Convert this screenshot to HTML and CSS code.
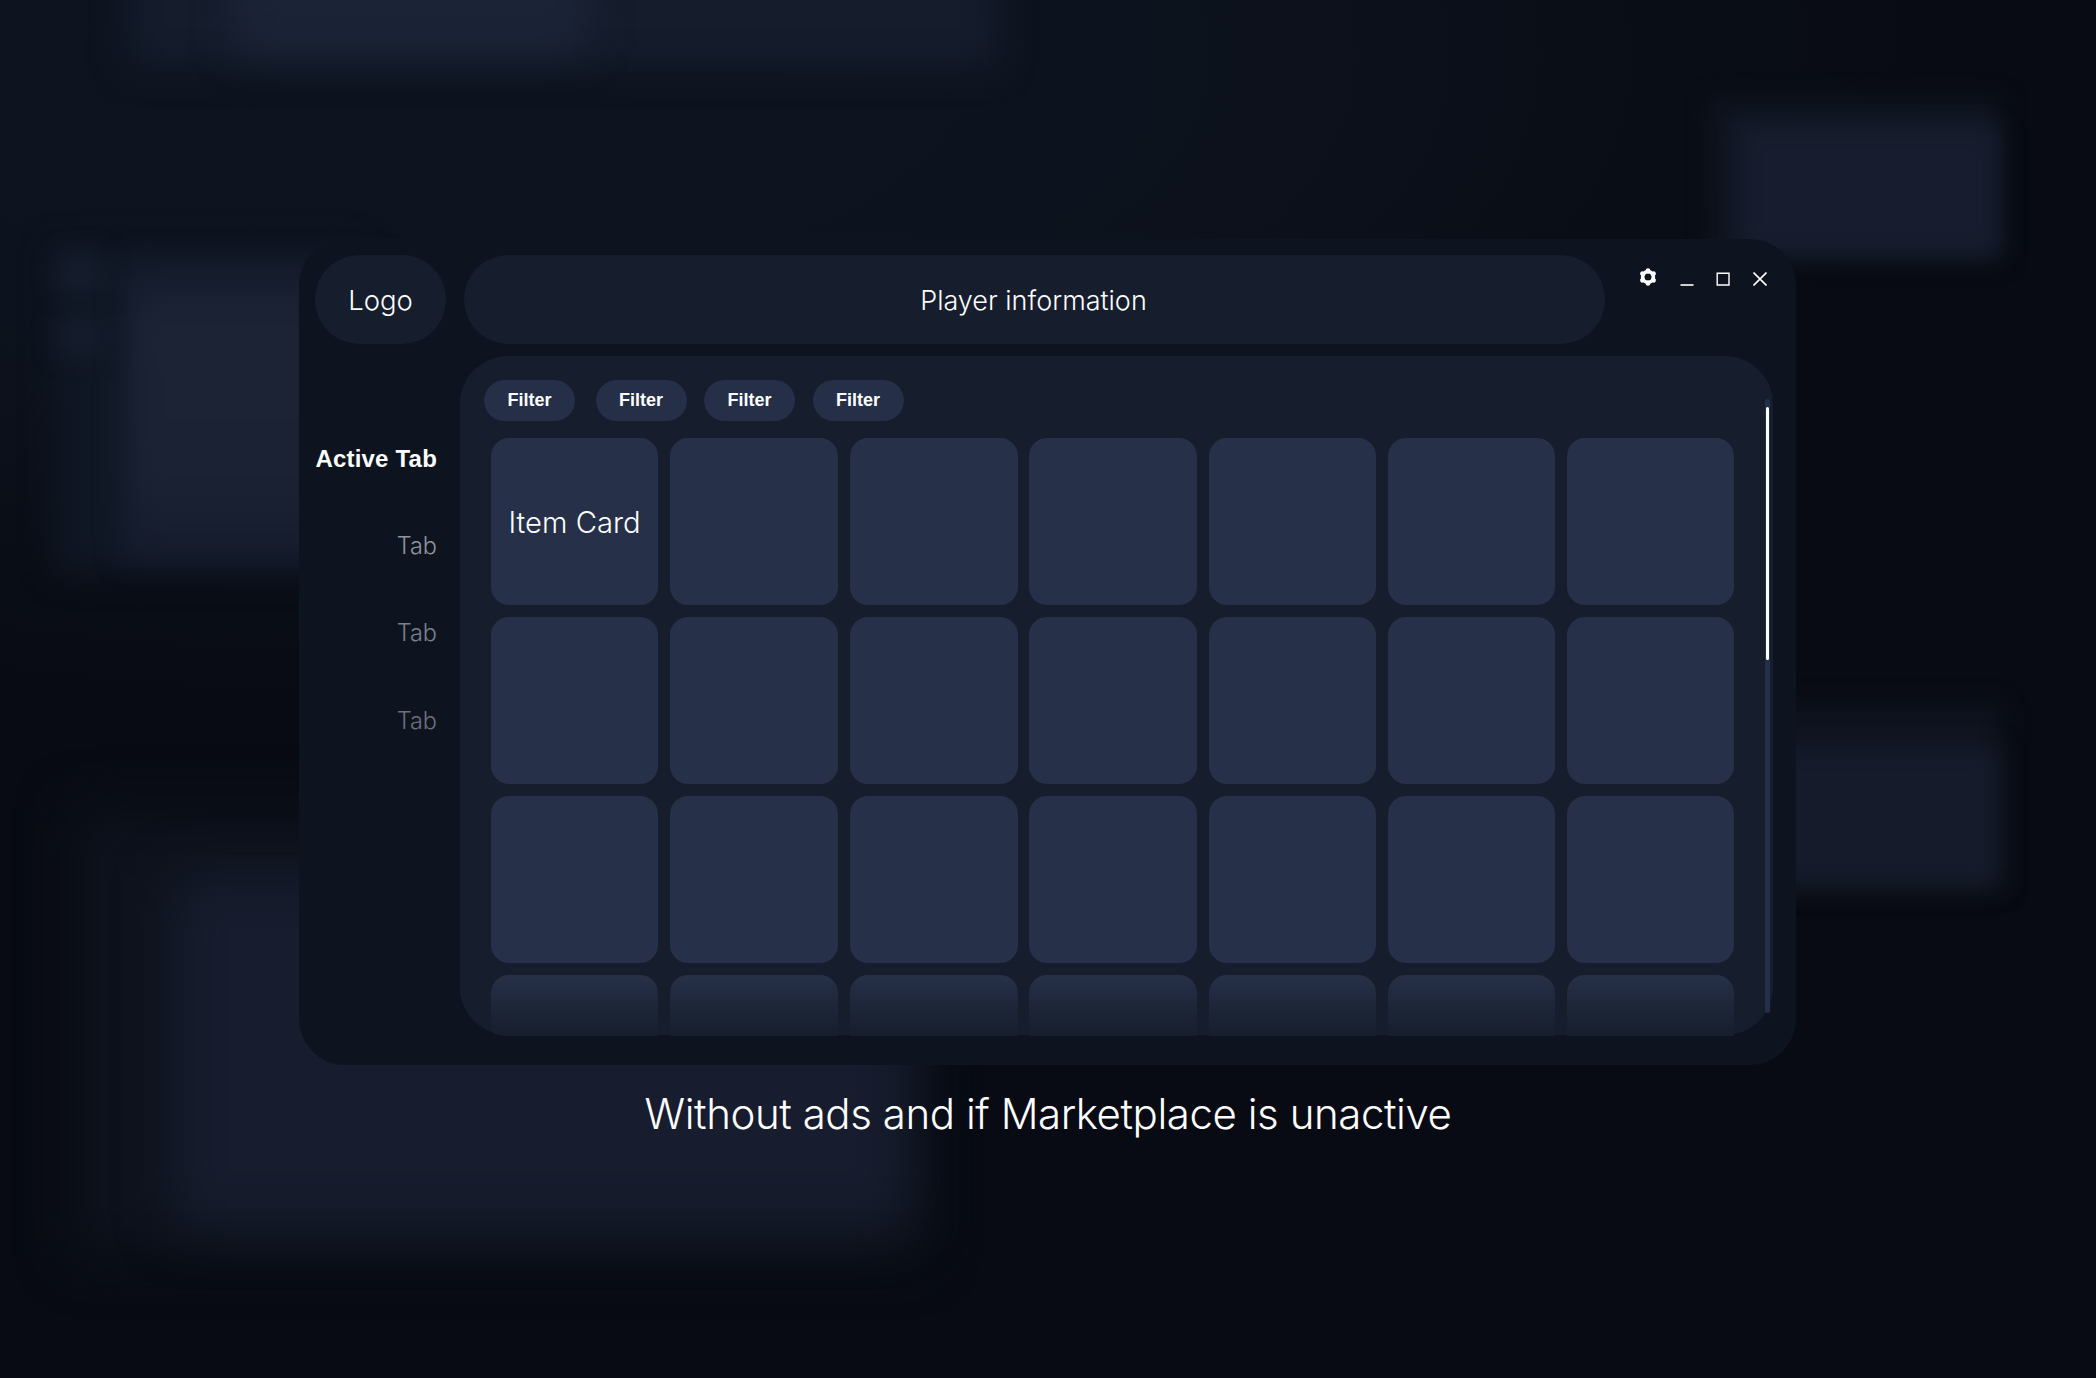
FILE: index.html
```html
<!DOCTYPE html>
<html lang="en">
<head>
    <meta charset="UTF-8">
    <meta name="viewport" content="width=device-width, initial-scale=1.0">
    <title>Inventory</title>
    <link rel="stylesheet" href="styles.css">
</head>
<body>
    <!-- Blurred shapes behind the window -->
    <div class="backdrop">
        <span class="glow glow-top"></span>
        <span class="glow glow-top-inner"></span>
        <span class="glow glow-left"></span>
        <span class="glow glow-left-inner"></span>
        <span class="glow glow-dot dot-one"></span>
        <span class="glow glow-dot dot-two"></span>
        <span class="glow glow-right"></span>
        <span class="glow glow-right-inner"></span>
        <span class="glow glow-middle"></span>
        <span class="glow glow-middle-inner"></span>
        <span class="glow glow-bottom"></span>
        <span class="glow glow-bottom-inner"></span>
    </div>

    <main class="window">
        <header class="header">
            <div class="logo">Logo</div>
            <div class="player-info">Player information</div>
            <div class="controls">
                <svg width="18" height="18" viewBox="0 0 18 18" fill="none" stroke="#fff">
                    <circle cx="9" cy="9" r="5.400" stroke-width="3.600"/>
                    <path stroke-width="4.600" stroke-linecap="round" d="M9 3.200V2.500M9 14.800v.7M14 6.100l.6-.35M4 11.900l-.6.35M14 11.900l.6.35M4 6.100l-.6-.35"/>
                </svg>
                <svg width="14" height="14" viewBox="0 0 14 14"><path d="M0.500 13h13" stroke="#fff" stroke-width="1.600"/></svg>
                <svg width="14" height="14" viewBox="0 0 14 14"><path d="M1.200 1.200h11.800v11.800H1.200z" fill="none" stroke="#fff" stroke-width="1.400"/></svg>
                <svg width="14" height="14" viewBox="0 0 14 14"><path d="M.5.5l13 13M13.500.5l-13 13" stroke="#fff" stroke-width="1.600"/></svg>
            </div>
        </header>

        <div class="content">
            <nav class="tabs">
                <a class="tab active">Active Tab</a>
                <a class="tab">Tab</a>
                <a class="tab tab-dim">Tab</a>
                <a class="tab tab-dimmer">Tab</a>
            </nav>

            <section class="panel">
                <div class="filters">
                    <button class="filter">Filter</button>
                    <button class="filter">Filter</button>
                    <button class="filter">Filter</button>
                    <button class="filter">Filter</button>
                </div>
                <div class="cards">
                    <div class="card">Item Card</div>
                    <div class="card"></div>
                    <div class="card"></div>
                    <div class="card"></div>
                    <div class="card"></div>
                    <div class="card"></div>
                    <div class="card"></div>
                    <div class="card"></div>
                    <div class="card"></div>
                    <div class="card"></div>
                    <div class="card"></div>
                    <div class="card"></div>
                    <div class="card"></div>
                    <div class="card"></div>
                    <div class="card"></div>
                    <div class="card"></div>
                    <div class="card"></div>
                    <div class="card"></div>
                    <div class="card"></div>
                    <div class="card"></div>
                    <div class="card"></div>
                    <div class="card fade"></div>
                    <div class="card fade"></div>
                    <div class="card fade"></div>
                    <div class="card fade"></div>
                    <div class="card fade"></div>
                    <div class="card fade"></div>
                    <div class="card fade"></div>
                </div>
                <div class="scrollbar"><div class="thumb"></div></div>
            </section>
        </div>
    </main>

    <p class="caption">Without ads and if Marketplace is unactive</p>
</body>
</html>
```
FILE: styles.css
```css
* {
    box-sizing: border-box;
}
body {
    margin: 0;
    height: 100vh;
    padding-top: 239px;
    overflow: hidden;
    position: relative;
    color: #fff;
    font-family: Inter, "Liberation Sans", sans-serif;
    font-weight: 300;
    background: radial-gradient(ellipse 1500px 640px at 420px 60px, #0d141f 0%, #0d131e 45%, #080b13 100%) #080b13;
}

/* Backdrop */
.backdrop {
    position: absolute;
    inset: 0;
    overflow: hidden;
    z-index: -1;
}
.glow {
    position: absolute;
    background: #171d2e;
    filter: blur(12px);
}
.glow-top {
    left: 130px;
    top: -60px;
    width: 866px;
    height: 124px;
    background: #151c2c;
    filter: blur(18px);
}
.glow-top-inner {
    left: 235px;
    top: -60px;
    width: 350px;
    height: 112px;
    background: #1b2437;
    filter: blur(20px);
}
.glow-left {
    left: 55px;
    top: 248px;
    width: 300px;
    height: 325px;
    background: #101724;
    filter: blur(16px);
}
.glow-left-inner {
    left: 124px;
    top: 262px;
    width: 260px;
    height: 298px;
    background: linear-gradient(#151b2b, #1b2335 20%, #1a2234 70%, #161c2d);
    filter: blur(14px);
}
.glow-dot {
    left: 58px;
    width: 44px;
    height: 36px;
    background: #161d2d;
}
.dot-one {
    top: 255px;
}
.dot-two {
    top: 318px;
}
.glow-right {
    left: 1712px;
    top: 100px;
    width: 288px;
    height: 160px;
    background: #101622;
}
.glow-right-inner {
    left: 1740px;
    top: 126px;
    width: 258px;
    height: 128px;
    filter: blur(11px);
}
.glow-middle {
    left: 1700px;
    top: 706px;
    width: 302px;
    height: 182px;
    background: #0f141f;
}
.glow-middle-inner {
    left: 1700px;
    top: 748px;
    width: 298px;
    height: 138px;
    background: #161b2b;
}
.glow-bottom {
    left: 72px;
    top: 808px;
    width: 850px;
    height: 450px;
    background: #0d121c;
    filter: blur(26px);
}
.glow-bottom-inner {
    left: 174px;
    top: 876px;
    width: 734px;
    height: 350px;
    filter: blur(27px);
}

/* Window */
.window {
    width: 1497px;
    height: 826px;
    margin: 0 auto 0 299px;
    padding-top: 16px;
    border-radius: 46px;
    background: #0e141f;
}
.header {
    display: flex;
    gap: 18px;
    padding-left: 16px;
}
.logo, .player-info {
    height: 89px;
    padding-top: 1px;
    display: flex;
    align-items: center;
    justify-content: center;
    border-radius: 45px;
    background: #161d2d;
    font-size: 27px;
}
.logo {
    width: 131px;
    font-size: 27.500px;
}
.player-info {
    width: 1141px;
    padding-right: 2px;
}
.controls {
    display: flex;
    align-items: flex-end;
    gap: 22.700px;
    height: 31px;
    margin-left: 16px;
}

/* Tabs and panel */
.content {
    display: flex;
    margin-top: 12px;
}
.tabs {
    width: 161px;
    padding: 88px 23px 0 0;
    display: flex;
    flex-direction: column;
    align-items: flex-end;
}
.tab {
    height: 87.200px;
    line-height: 29px;
    font-size: 23.500px;
    white-space: nowrap;
    color: #90949d;
}
.tab-dim {
    color: #7c808b;
}
.tab-dimmer {
    color: #6c707c;
}
.active {
    color: #fff;
    font-family: "Liberation Sans", Arial, sans-serif;
    font-size: 24px;
    font-weight: 700;
    letter-spacing: 0.200px;
}
.panel {
    position: relative;
    width: 1313px;
    height: 679px;
    padding: 24px 40px 0 31px;
    border-radius: 48px;
    background: #161d2d;
}
.filters {
    display: flex;
    gap: 17.500px;
    margin-left: -7px;
}
.filter {
    width: 91px;
    height: 41px;
    padding: 0;
    border: none;
    border-radius: 20.500px;
    background: #252f48;
    color: #fff;
    font-family: "Liberation Sans", Arial, sans-serif;
    font-size: 18px;
    font-weight: 700;
    line-height: 41px;
}
.filter:first-child {
    margin-right: 3px;
}
.cards {
    display: grid;
    grid-template-columns: 167px 168px 168px 168px 167px 167px 167px;
    grid-template-rows: repeat(3, 167px) 61px;
    gap: 12px 11.800px;
    margin-top: 17px;
}
.card {
    display: flex;
    align-items: center;
    justify-content: center;
    border-radius: 18px;
    background: #263048;
    font-size: 29.200px;
}
.card:first-child {
    padding-top: 1px;
}
.fade {
    border-radius: 18px 18px 0 0;
    background: linear-gradient(#263048, #1b2435 65%, #171e2e);
}
.fade:nth-last-child(7) {
    border-bottom-left-radius: 18px 6px;
}
.scrollbar {
    position: absolute;
    top: 43px;
    right: 3px;
    width: 5px;
    height: 614px;
    padding: 8px 1px 0;
    border-radius: 3px;
    background: #252f48;
}
.thumb {
    height: 253px;
    border-radius: 2px;
    background: #fff;
}

.caption {
    margin: 23px 0 0;
    text-align: center;
    font-size: 42px;
    line-height: 52px;
    letter-spacing: -0.440px;
}
```
